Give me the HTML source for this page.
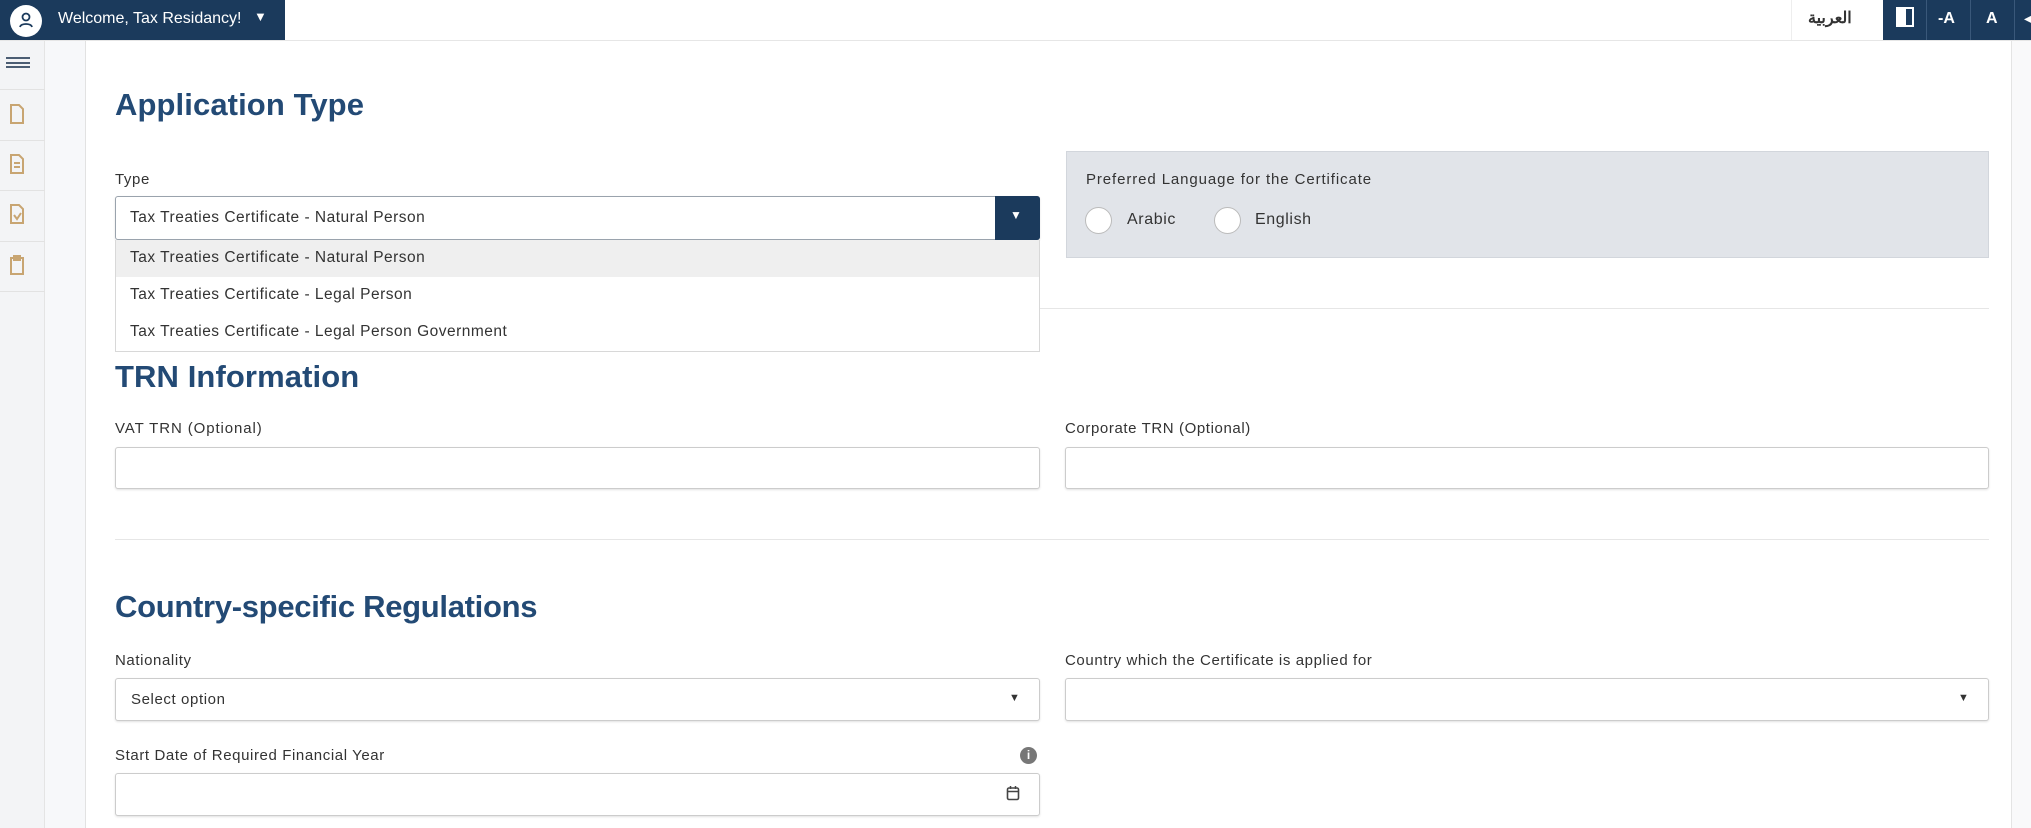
<!DOCTYPE html>
<html><head><meta charset="utf-8"><style>
*{box-sizing:border-box;margin:0;padding:0}
body{width:2031px;height:828px;overflow:hidden;background:#fff;font-family:"Liberation Sans",sans-serif;color:#222;position:relative}
.a{position:absolute}
.dark{background:#1b3a5c}
.h{color:#234a75;font-weight:bold;font-size:31px;letter-spacing:0.1px}
.lbl{font-size:15px;color:#333;letter-spacing:0.6px}
.inp{border:1px solid #ccc;border-radius:3px;background:#fff;box-shadow:0 1px 2px rgba(0,0,0,.12)}
.opt{font-size:15.5px;color:#333;left:130px;letter-spacing:0.5px}
</style></head><body>
<div class="a dark" style="left:0;top:0;width:285px;height:40px"></div>
<div class="a" style="left:10px;top:5px;width:32px;height:32px;border-radius:50%;background:#fff"></div>
<svg class="a" style="left:16px;top:10px" width="20" height="20" viewBox="0 0 20 20"><circle cx="10" cy="7" r="3.5" fill="none" stroke="#1b3a5c" stroke-width="1.8"/><path d="M4 17c1-4 11-4 12 0" fill="none" stroke="#1b3a5c" stroke-width="1.8"/></svg>
<div class="a" style="left:58px;top:10px;color:#fff;font-size:16px">Welcome, Tax Residancy!</div>
<div class="a" style="left:254px;top:9px;color:#fff;font-size:13px">▼</div>
<div class="a" style="left:0;top:40px;width:2031px;height:1px;background:#e6e6e6"></div>
<div class="a" style="left:1791px;top:0;width:91px;height:40px;background:#fff;border-left:1px solid #eee"></div>
<div class="a" style="left:1808px;top:8px;font-size:16px;color:#333;font-weight:bold">العربية</div>
<div class="a dark" style="left:1883px;top:0;width:148px;height:40px"></div>
<div class="a" style="left:1926px;top:0;width:1px;height:40px;background:#3a587a"></div>
<div class="a" style="left:1970px;top:0;width:1px;height:40px;background:#3a587a"></div>
<div class="a" style="left:2014px;top:0;width:1px;height:40px;background:#3a587a"></div>
<div class="a" style="left:1896px;top:7px;width:18px;height:20px;border:2px solid #fff"><div style="width:8px;height:100%;background:#fff"></div></div>
<div class="a" style="left:1938px;top:10px;color:#fff;font-size:16px;font-weight:bold">-A</div>
<div class="a" style="left:1986px;top:10px;color:#fff;font-size:16px;font-weight:bold">A</div>
<div class="a" style="left:2024px;top:10px;color:#fff;font-size:14px">◂</div>
<div class="a" style="left:0;top:41px;width:45px;height:787px;background:#f3f4f6;border-right:1px solid #e4e4e4"></div>
<div class="a" style="left:45px;top:41px;width:41px;height:787px;background:#f7f8fa;border-right:1px solid #e2e2e2"></div>
<div class="a" style="left:6px;top:57px;width:24px;height:11px;border-top:2px solid #4b5d73;border-bottom:2px solid #4b5d73"><div style="margin-top:2.5px;height:2px;background:#4b5d73"></div></div>
<div class="a" style="left:0;top:89px;width:45px;height:1px;background:#e2e2e2"></div>
<div class="a" style="left:0;top:140px;width:45px;height:1px;background:#e2e2e2"></div>
<div class="a" style="left:0;top:190px;width:45px;height:1px;background:#e2e2e2"></div>
<div class="a" style="left:0;top:241px;width:45px;height:1px;background:#e2e2e2"></div>
<div class="a" style="left:0;top:291px;width:45px;height:1px;background:#e2e2e2"></div>
<svg class="a" style="left:9px;top:103px" width="16" height="22"><path d="M2 2h8l4 4v14H2z" fill="none" stroke="#c8a572" stroke-width="2"/></svg>
<svg class="a" style="left:9px;top:153px" width="16" height="22"><path d="M2 2h8l4 4v14H2z M5 10h6M5 14h6" fill="none" stroke="#c8a572" stroke-width="2"/></svg>
<svg class="a" style="left:9px;top:203px" width="16" height="22"><path d="M2 2h8l4 4v14H2z M5 12l3 4 4-6" fill="none" stroke="#c8a572" stroke-width="2"/></svg>
<svg class="a" style="left:9px;top:254px" width="16" height="22"><path d="M2 4h12v16H2z M5 2h6v4H5z" fill="none" stroke="#c8a572" stroke-width="2"/></svg>
<div class="a" style="left:2011px;top:41px;width:1px;height:787px;background:#e4e4e4"></div>
<div class="a" style="left:2012px;top:41px;width:19px;height:787px;background:#f9f9fa"></div>

<div class="a h" style="left:115px;top:87px">Application Type</div>
<div class="a lbl" style="left:115px;top:171px">Type</div>
<div class="a inp" style="left:115px;top:196px;width:925px;height:44px;border-color:#9aa3ad"></div>
<div class="a opt" style="top:209px">Tax Treaties Certificate - Natural Person</div>
<div class="a dark" style="left:995px;top:196px;width:45px;height:44px;border-radius:0 3px 3px 0"></div>
<div class="a" style="left:1010px;top:208px;color:#fff;font-size:12px">▼</div>
<div class="a" style="left:115px;top:240px;width:925px;height:112px;border:1px solid #d8d8d8;background:#fff"></div>
<div class="a" style="left:116px;top:240px;width:923px;height:37px;background:#efefef"></div>
<div class="a opt" style="top:249px">Tax Treaties Certificate - Natural Person</div>
<div class="a opt" style="top:286px">Tax Treaties Certificate - Legal Person</div>
<div class="a opt" style="top:323px">Tax Treaties Certificate - Legal Person Government</div>

<div class="a" style="left:1066px;top:151px;width:923px;height:107px;background:#e1e4e9;border:1px solid #d2d6dc"></div>
<div class="a lbl" style="left:1086px;top:171px;letter-spacing:0.9px">Preferred Language for the Certificate</div>
<div class="a" style="left:1085px;top:207px;width:27px;height:27px;border-radius:50%;background:#fff;border:1px solid #bbb"></div>
<div class="a lbl" style="left:1127px;top:211px;font-size:16px">Arabic</div>
<div class="a" style="left:1214px;top:207px;width:27px;height:27px;border-radius:50%;background:#fff;border:1px solid #bbb"></div>
<div class="a lbl" style="left:1255px;top:211px;font-size:16px">English</div>

<div class="a" style="left:1040px;top:308px;width:949px;height:1px;background:#e6e6e6"></div>
<div class="a h" style="left:115px;top:359px">TRN Information</div>
<div class="a lbl" style="left:115px;top:420px;letter-spacing:0.9px">VAT TRN (Optional)</div>
<div class="a lbl" style="left:1065px;top:420px">Corporate TRN (Optional)</div>
<div class="a inp" style="left:115px;top:447px;width:925px;height:42px"></div>
<div class="a inp" style="left:1065px;top:447px;width:924px;height:42px"></div>
<div class="a" style="left:115px;top:539px;width:1874px;height:1px;background:#e6e6e6"></div>

<div class="a h" style="left:115px;top:589px;letter-spacing:-0.3px">Country-specific Regulations</div>
<div class="a lbl" style="left:115px;top:652px">Nationality</div>
<div class="a lbl" style="left:1065px;top:652px">Country which the Certificate is applied for</div>
<div class="a inp" style="left:115px;top:678px;width:925px;height:43px"></div>
<div class="a lbl" style="left:131px;top:691px">Select option</div>
<div class="a" style="left:1009px;top:692px;font-size:11px;color:#333">▼</div>
<div class="a inp" style="left:1065px;top:678px;width:924px;height:43px"></div>
<div class="a" style="left:1958px;top:692px;font-size:11px;color:#333">▼</div>
<div class="a lbl" style="left:115px;top:747px">Start Date of Required Financial Year</div>
<div class="a" style="left:1020px;top:747px;width:17px;height:17px;border-radius:50%;background:#777;color:#fff;font-size:12px;font-weight:bold;text-align:center;line-height:17px">i</div>
<div class="a inp" style="left:115px;top:773px;width:925px;height:43px"></div>
<svg class="a" style="left:1006px;top:785px" width="14" height="16"><rect x="1.5" y="3" width="11" height="11.5" rx="1.5" fill="none" stroke="#444" stroke-width="1.6"/><path d="M1.5 6.5h11M4.5 1v3M9.5 1v3" stroke="#444" stroke-width="1.5"/></svg>
</body></html>
